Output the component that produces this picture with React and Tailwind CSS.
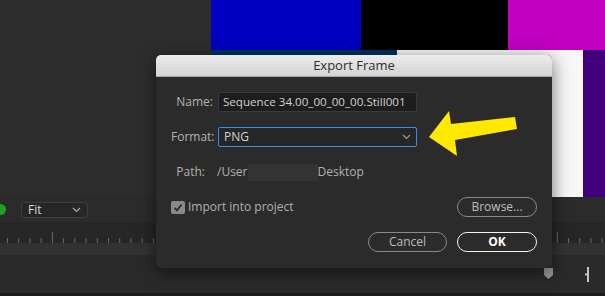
import React from 'react';

const font = { fontFamily: '"Open Sans", "Liberation Sans", sans-serif' };

const Ruler = () => {
  const ticks = [];
  for (let i = 0; i < 54; i++) {
    const x = 7.5 + i * 11.22;
    const tall = i === 4 || i === 49;
    ticks.push(<line key={i} x1={x} x2={x} y1={tall ? 10 : 16} y2={21} stroke="#6a6a6a" strokeWidth="1" />);
  }
  return (
    <svg width="605" height="21" className="block">
      {ticks}
    </svg>
  );
};

const Chevron = ({ color = '#9a9a9a' }) => (
  <svg width="9" height="6" viewBox="0 0 9 6">
    <path d="M1 1 L4.5 4.5 L8 1" fill="none" stroke={color} strokeWidth="1.2" />
  </svg>
);

const ExportDialog = () => (
  <div className="absolute left-[156px] top-[55px] w-[396px] h-[213px] rounded-[5px] bg-[#2b2b2b] shadow-[0_4px_18px_rgba(0,0,0,0.55)] overflow-hidden" style={font}>
    <div className="h-[22px] flex items-center justify-center bg-gradient-to-b from-[#ededed] to-[#d4d4d4] border-b border-[#a9a9a9] text-[13px] text-[#2e2e2e]">
      Export Frame
    </div>
    <div className="flex flex-col gap-[15px] pt-[15px] px-[15px] text-[12px] text-[#b2b2b2]">
      <div className="flex items-center h-5">
        <span className="w-[42px] text-right">Name:</span>
        <div className="ml-[5px] w-[199px] h-5 flex items-center px-[4px] bg-[#1d1d1d] border border-[#3a3a3a] rounded-[2px] text-[#d2d2d2] text-[11.6px] whitespace-nowrap overflow-hidden">
          Sequence 34.00_00_00_00.Still001
        </div>
      </div>
      <div className="flex items-center h-5">
        <span className="w-[42px] text-right">Format:</span>
        <div className="ml-[5px] w-[199px] h-5 flex items-center justify-between px-[5px] bg-[#262626] border border-[#3d8ee0] rounded-[2px] text-[#d2d2d2]">
          <span>PNG</span>
          <Chevron />
        </div>
      </div>
      <div className="flex items-center h-5">
        <span className="w-[34px] text-right">Path:</span>
        <span className="ml-[12px]">/User</span>
        <span className="w-[70px] h-[17px] bg-[#333333]" />
        <span>Desktop</span>
      </div>
      <div className="flex items-center justify-between h-5">
        <label className="flex items-center gap-[3px]">
          <span className="w-[14px] h-[13px] rounded-[2px] bg-[#8a8a8a] flex items-center justify-center">
            <svg width="10" height="9" viewBox="0 0 10 9">
              <path d="M1.5 4.8 L4 7.3 L8.6 1.5" fill="none" stroke="#2b2b2b" strokeWidth="1.8" />
            </svg>
          </span>
          <span className="text-[#b0b0b0]">Import into project</span>
        </label>
        <button className="w-[80px] h-5 rounded-full border border-[#8a8a8a] text-[#bdbdbd] flex items-center justify-center">
          Browse...
        </button>
      </div>
      <div className="flex items-center justify-end gap-[10px] h-5">
        <button className="w-[79px] h-5 rounded-full border border-[#8a8a8a] text-[#bdbdbd] flex items-center justify-center">
          Cancel
        </button>
        <button className="w-[80px] h-5 rounded-full border-[1.5px] border-[#f4f4f4] text-white font-bold flex items-center justify-center">
          OK
        </button>
      </div>
    </div>
  </div>
);

const Arrow = () => (
  <svg className="absolute left-0 top-0" width="605" height="296" pointerEvents="none">
    <polygon
      points="429,137 449,111 451,124 515,117 517,129 455,140 457,156"
      fill="#ffe900"
    />
  </svg>
);

export default function App() {
  return (
    <div className="relative w-[605px] h-[296px] overflow-hidden bg-[#2c2c2c]" style={font}>
      <div className="flex h-[197px]">
        <div className="w-[211px] bg-[#2d2d2d]" />
        <div className="flex-1 flex flex-col">
          <div className="flex h-[50px]">
            <div className="w-[150px] bg-[#0000c0]" />
            <div className="w-[147px] bg-black" />
            <div className="flex-1 bg-[#c000c0]" />
          </div>
          <div className="flex flex-1">
            <div className="w-[186px] bg-[#00335e]" />
            <div className="w-[186px] bg-[#f7f7f7]" />
            <div className="flex-1 bg-[#3f007a]" />
          </div>
        </div>
      </div>
      <div className="h-[25px] bg-[#2b2b2b] flex items-center">
        <span className="w-[11px] h-[11px] rounded-full bg-[#22a022] -ml-[5px]" />
        <div className="ml-[15px] w-[67px] h-[16px] rounded-[3px] border border-[#3e3e3e] bg-[#262626] flex items-center justify-between px-[6px] text-[12px] text-[#dcdcdc]">
          <span>Fit</span>
          <Chevron color="#aaaaaa" />
        </div>
      </div>
      <div className="h-[21px] bg-[#262626]">
        <Ruler />
      </div>
      <div className="h-[12px] bg-[#323232]" />
      <div className="h-[38px] bg-[#2a2a2a] flex items-start">
        <svg className="ml-[544px] mt-[13px]" width="10" height="12" viewBox="0 0 10 12">
          <polygon points="0,0 9,0 9,7 4.5,11 0,7" fill="#9a9a9a" />
        </svg>
        <svg className="ml-[29px] mt-[12px]" width="8" height="15" viewBox="0 0 8 15">
          <path d="M5 0 V15 M5 7.5 L2 7.5" stroke="#c4c4c4" strokeWidth="2" fill="none" />
        </svg>
      </div>
      <div className="h-[3px] bg-[#1c1c1c]" />
      <ExportDialog />
      <Arrow />
    </div>
  );
}
